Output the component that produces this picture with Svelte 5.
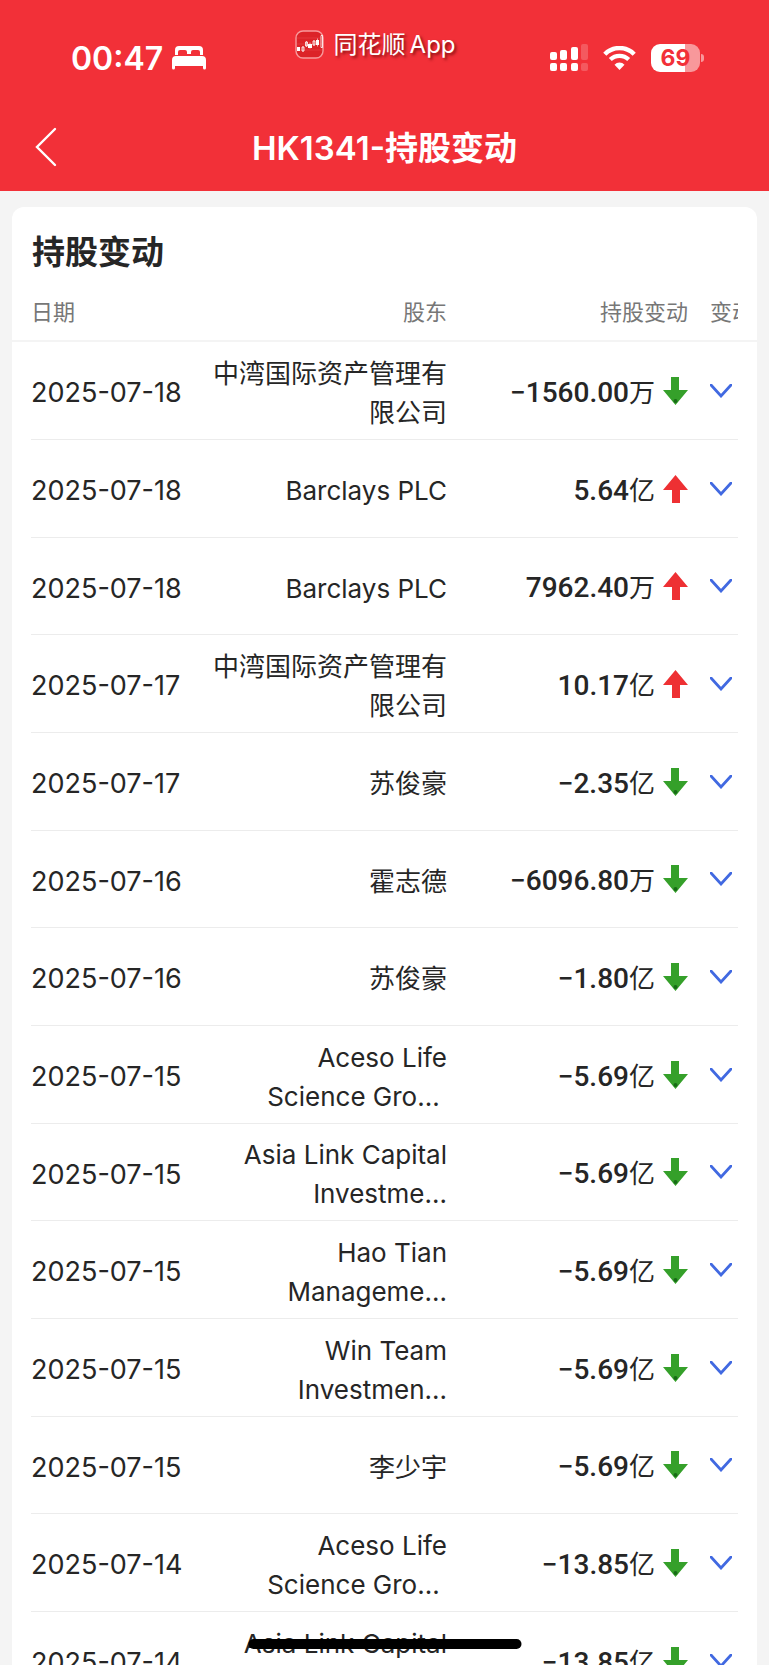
<script>
  const columns = ['日期', '股东', '持股变动', '变动'];

  const records = [
    { date: '2025-07-18', holder: ['中湾国际资产管理有', '限公司'], amount: '−1560.00', unit: '万' },
    { date: '2025-07-18', holder: ['Barclays PLC'], amount: '5.64', unit: '亿' },
    { date: '2025-07-18', holder: ['Barclays PLC'], amount: '7962.40', unit: '万' },
    { date: '2025-07-17', holder: ['中湾国际资产管理有', '限公司'], amount: '10.17', unit: '亿' },
    { date: '2025-07-17', holder: ['苏俊豪'], amount: '−2.35', unit: '亿' },
    { date: '2025-07-16', holder: ['霍志德'], amount: '−6096.80', unit: '万' },
    { date: '2025-07-16', holder: ['苏俊豪'], amount: '−1.80', unit: '亿' },
    { date: '2025-07-15', holder: ['Aceso Life', 'Science Gro...\u00a0'], amount: '−5.69', unit: '亿' },
    { date: '2025-07-15', holder: ['Asia Link Capital', 'Investme...'], amount: '−5.69', unit: '亿' },
    { date: '2025-07-15', holder: ['Hao Tian', 'Manageme...'], amount: '−5.69', unit: '亿' },
    { date: '2025-07-15', holder: ['Win Team', 'Investmen...'], amount: '−5.69', unit: '亿' },
    { date: '2025-07-15', holder: ['李少宇'], amount: '−5.69', unit: '亿' },
    { date: '2025-07-14', holder: ['Aceso Life', 'Science Gro...\u00a0'], amount: '−13.85', unit: '亿' },
    { date: '2025-07-14', holder: ['Asia Link Capital', 'Investme...'], amount: '−13.85', unit: '亿' }
  ];

  let expanded = $state(null);

  function toggle(index) {
    expanded = expanded === index ? null : index;
  }
</script>

<div class="screen">
  <header>
    <div class="status">
      <div class="clock">
        <span>00:47</span>
        <svg width="34" height="24" viewBox="0 0 34 24" fill="#fff" aria-hidden="true">
          <path d="M3 9V4a4 4 0 0 1 4-4h20a4 4 0 0 1 4 4v5h-3V6a2 2 0 0 0-2-2h-5a2 2 0 0 0-2 2v2h-4V6a2 2 0 0 0-2-2H8a2 2 0 0 0-2 2v3z" />
          <path d="M4 10h26a4 4 0 0 1 4 4v8a1 1 0 0 1-3 0v-2H3v2a1 1 0 0 1-3 0v-8a4 4 0 0 1 4-4z" />
        </svg>
      </div>

      <div class="brand">
        <svg width="29" height="29" viewBox="0 0 29 29" aria-hidden="true">
          <rect x="1" y="1" width="27" height="27" rx="7" fill="#dc2328" stroke="#f79a9c" stroke-width="1.4" />
          <path d="M2 8h25M2 14h25M2 20h25" stroke="#e94347" stroke-width=".6" />
          <path d="M2 17h3v4H2zM13 14h4v4h-4zM21 10h3v5h-3z" fill="#fff" />
          <path d="M7 17h2v4H7zM10.500 12h2v4h-2zM18 11h2v4h-2zM26 5.500h1.500v12H26z" fill="none" stroke="#fff" stroke-width=".8" />
          <path d="M8 16v6M11.500 11v6M15 12.500v6M19 10v6M22.500 8.500v8" stroke="#fff" stroke-width=".6" />
        </svg>
        <p><span>同花顺</span><span>App</span></p>
      </div>

      <div class="signals">
        <svg width="38" height="28" viewBox="0 0 38 28" fill="#fff" aria-hidden="true">
          <rect x="0" y="8" width="7" height="8" rx="2" />
          <rect x="10" y="6" width="7" height="10" rx="2" />
          <rect x="21" y="3" width="7" height="13" rx="2" />
          <rect x="31" y="0" width="7" height="16" rx="2" opacity=".2" />
          <rect x="0" y="19" width="7" height="8" rx="2" />
          <rect x="10" y="19" width="7" height="8" rx="2" />
          <rect x="21" y="19" width="7" height="8" rx="2" />
          <rect x="31" y="19" width="7" height="8" rx="2" opacity=".2" />
        </svg>
        <svg width="33" height="24" viewBox="0 0 33 24" aria-hidden="true">
          <path d="M1.800 8.200a20.500 20.500 0 0 1 29.400 0" fill="none" stroke="#fff" stroke-width="4.400" />
          <path d="M7.300 13.600a13 13 0 0 1 18.400 0" fill="none" stroke="#fff" stroke-width="4.200" />
          <path d="M16.500 24l-5-5.300a7 7 0 0 1 10 0z" fill="#fff" />
        </svg>
        <div class="battery"><span>69</span></div>
      </div>
    </div>

    <nav>
      <button class="back" aria-label="返回">
        <svg width="22" height="40" viewBox="0 0 22 40" fill="none" stroke="#fff" stroke-width="2.400" stroke-linecap="round">
          <path d="M20 2L2 20l18 18" />
        </svg>
      </button>
      <h1>HK1341-持股变动</h1>
    </nav>
  </header>

  <main>
    <h2>持股变动</h2>
    <table>
      <thead>
        <tr>
          {#each columns as column}
            <th>{column}</th>
          {/each}
        </tr>
      </thead>
      <tbody>
        {#each records as record, i}
          <tr>
            <td class="date">{record.date}</td>
            <td class="holder">
              {#each record.holder as line}
                <span>{line}</span>
              {/each}
            </td>
            <td class="change">
              <span class="amount">{record.amount}<span class="unit">{record.unit}</span></span>
              {#if record.amount.startsWith('−')}
                <svg width="25" height="28" viewBox="0 0 25 28" aria-hidden="true">
                  <path d="M8 0h8v13h9L12.500 28 0 13h8z" fill="#35a02a" />
                  <circle cx="12.500" cy="24" r="2" fill="#176b16" />
                </svg>
              {:else}
                <svg width="25" height="28" viewBox="0 0 25 28" aria-hidden="true">
                  <path d="M12.500 0L25 15h-8v13H9V15H0z" fill="#ee3033" />
                </svg>
              {/if}
            </td>
            <td>
              <button class="expand" class:open={expanded === i} aria-label="展开" onclick={() => toggle(i)}>
                <svg width="22" height="14" viewBox="0 0 22 14" fill="none" stroke="#4169e1" stroke-width="2.800" stroke-linecap="round">
                  <path d="M1 1l10 11L21 1" />
                </svg>
              </button>
            </td>
          </tr>
        {/each}
      </tbody>
    </table>
  </main>

  <div class="home-bar"></div>
</div>

<style>
  :global(body) {
    margin: 0;
    background: #f4f4f4;
  }

  .screen {
    height: 100vh;
    overflow: hidden;
    background: #f4f4f4;
    color: #262626;
    font-family: Inter, 'Noto Sans CJK SC', sans-serif;
  }

  header {
    background: #f23038;
    color: #fff;
  }

  .status {
    display: flex;
    justify-content: space-between;
    align-items: flex-start;
    height: 73px;
    padding: 30px 65px 0 71px;
  }

  .clock,
  .signals {
    display: flex;
    align-items: center;
    height: 28px;
    padding-top: 14px;
  }

  .clock {
    gap: 9px;
    font-size: 32px;
    font-weight: 600;
  }

  .brand {
    display: flex;
    align-items: center;
    gap: 10px;
    height: 29px;
    margin-right: 6px;
  }

  .brand p {
    display: flex;
    gap: 4px;
    margin: 0;
    font-size: 24px;
    line-height: 28px;
    text-shadow: 2px 2px 3px rgba(90, 0, 0, 0.7);
  }

  .signals {
    gap: 15px;
  }

  .battery {
    position: relative;
    width: 49px;
    height: 28px;
    margin-right: 4px;
    border-radius: 9px;
    background: linear-gradient(90deg, #fff 69%, #f8989b 69%);
    color: #f23038;
    font-size: 23px;
    font-weight: 700;
    line-height: 28px;
    text-align: center;
  }

  .battery::after {
    content: '';
    position: absolute;
    top: 10px;
    right: -4px;
    width: 3px;
    height: 8px;
    border-radius: 0 4px 4px 0;
    background: #f8989b;
  }

  nav {
    display: grid;
    grid-template-columns: 60px 1fr 60px;
    align-items: center;
    height: 88px;
  }

  button {
    display: flex;
    padding: 0;
    border: 0;
    background: none;
    cursor: pointer;
  }

  .back {
    padding-left: 35px;
  }

  h1,
  h2 {
    margin: 0;
    font-size: 33px;
    font-weight: 600;
    line-height: 48px;
  }

  h1 {
    padding-top: 2px;
    text-align: center;
  }

  main {
    margin: 16px 12px 0;
    padding-top: 21px;
    border-radius: 12px;
    background: #fff;
  }

  h2 {
    padding: 0 20px;
  }

  table,
  thead,
  tbody {
    display: block;
  }

  tr {
    display: grid;
    grid-template-columns: 1fr 236px 241px 50px;
    align-items: center;
  }

  thead tr {
    height: 56px;
    padding: 8px 19px 0;
    border-bottom: 2px solid #f4f4f4;
  }

  tbody tr {
    height: 97px;
    margin: 0 19px;
    border-bottom: 1px solid #ececec;
  }

  /* keeps the average row pitch just under 98px */
  tbody tr:nth-child(3n) {
    height: 96px;
  }

  th,
  td {
    padding: 0;
    text-align: right;
  }

  th {
    overflow: hidden;
    color: #777;
    font-size: 22px;
    font-weight: 400;
    line-height: 32px;
    white-space: nowrap;
  }

  th:first-child,
  td:first-child {
    text-align: left;
  }

  th:last-child {
    margin-left: 22px;
    text-align: left;
  }

  td {
    font-size: 27px;
    line-height: 39px;
    white-space: nowrap;
  }

  .date,
  .holder,
  .amount {
    padding-top: 4px;
  }

  .holder {
    font-size: 26px;
  }

  .holder span {
    display: block;
  }

  .change {
    display: flex;
    justify-content: flex-end;
    align-items: center;
    gap: 8px;
  }

  .amount {
    font-family: Roboto, 'Noto Sans CJK SC', sans-serif;
    font-size: 28px;
    font-weight: 500;
  }

  .unit {
    font-size: 26px;
    font-weight: 400;
  }

  .expand {
    margin-left: 22px;
  }

  .expand.open svg {
    transform: rotate(180deg);
  }

  .home-bar {
    position: fixed;
    bottom: 16px;
    left: 50%;
    width: 273px;
    height: 10px;
    border-radius: 5px;
    background: #000;
    transform: translateX(-50%);
  }
</style>
